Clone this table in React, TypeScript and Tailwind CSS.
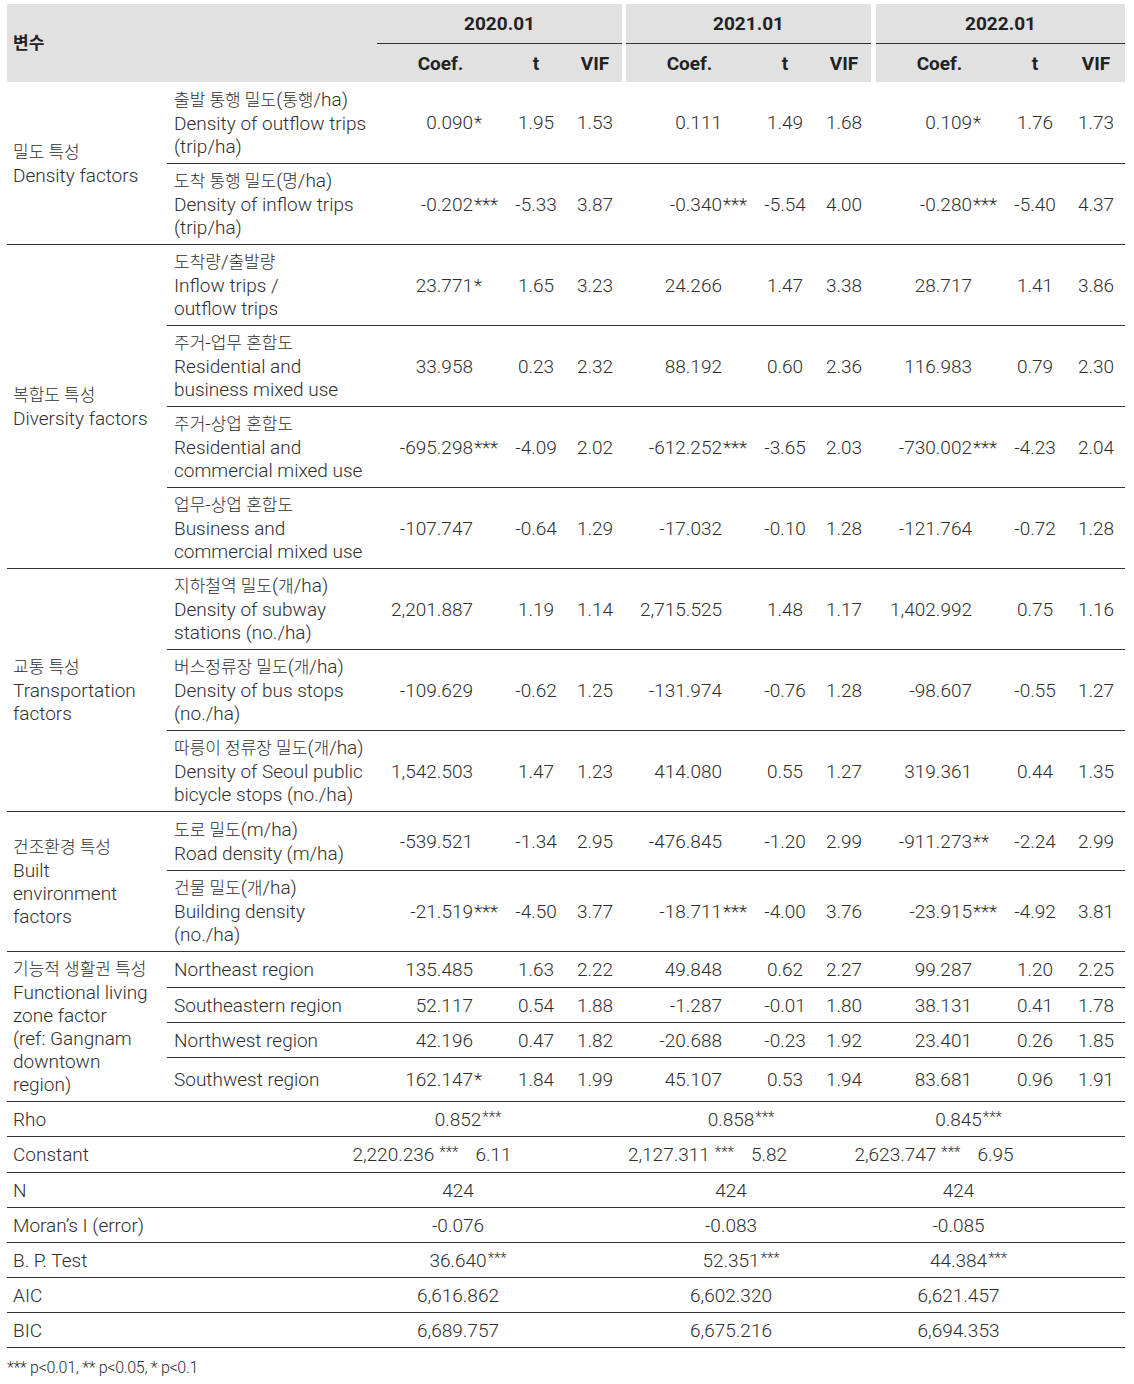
import React from "react";

type Cell = [string, string, string, string];
type Row = { label: string[]; h: number; vals: [Cell, Cell, Cell] };
type Group = { cat: string[]; rows: Row[] };

const groups: Group[] = [
  {
    cat: ["밀도 특성", "Density factors"],
    rows: [
      {
        label: ["출발 통행 밀도(통행/ha)", "Density of outflow trips", "(trip/ha)"],
        h: 82,
        vals: [
          ["0.090", "*", "1.95", "1.53"],
          ["0.111", "", "1.49", "1.68"],
          ["0.109", "*", "1.76", "1.73"],
        ],
      },
      {
        label: ["도착 통행 밀도(명/ha)", "Density of inflow trips", "(trip/ha)"],
        h: 81,
        vals: [
          ["-0.202", "***", "-5.33", "3.87"],
          ["-0.340", "***", "-5.54", "4.00"],
          ["-0.280", "***", "-5.40", "4.37"],
        ],
      },
    ],
  },
  {
    cat: ["복합도 특성", "Diversity factors"],
    rows: [
      {
        label: ["도착량/출발량", "Inflow trips /", "outflow trips"],
        h: 81,
        vals: [
          ["23.771", "*", "1.65", "3.23"],
          ["24.266", "", "1.47", "3.38"],
          ["28.717", "", "1.41", "3.86"],
        ],
      },
      {
        label: ["주거-업무 혼합도", "Residential and", "business mixed use"],
        h: 81,
        vals: [
          ["33.958", "", "0.23", "2.32"],
          ["88.192", "", "0.60", "2.36"],
          ["116.983", "", "0.79", "2.30"],
        ],
      },
      {
        label: ["주거-상업 혼합도", "Residential and", "commercial mixed use"],
        h: 81,
        vals: [
          ["-695.298", "***", "-4.09", "2.02"],
          ["-612.252", "***", "-3.65", "2.03"],
          ["-730.002", "***", "-4.23", "2.04"],
        ],
      },
      {
        label: ["업무-상업 혼합도", "Business and", "commercial mixed use"],
        h: 81,
        vals: [
          ["-107.747", "", "-0.64", "1.29"],
          ["-17.032", "", "-0.10", "1.28"],
          ["-121.764", "", "-0.72", "1.28"],
        ],
      },
    ],
  },
  {
    cat: ["교통 특성", "Transportation", "factors"],
    rows: [
      {
        label: ["지하철역 밀도(개/ha)", "Density of subway", "stations (no./ha)"],
        h: 81,
        vals: [
          ["2,201.887", "", "1.19", "1.14"],
          ["2,715.525", "", "1.48", "1.17"],
          ["1,402.992", "", "0.75", "1.16"],
        ],
      },
      {
        label: ["버스정류장 밀도(개/ha)", "Density of bus stops", "(no./ha)"],
        h: 81,
        vals: [
          ["-109.629", "", "-0.62", "1.25"],
          ["-131.974", "", "-0.76", "1.28"],
          ["-98.607", "", "-0.55", "1.27"],
        ],
      },
      {
        label: ["따릉이 정류장 밀도(개/ha)", "Density of Seoul public", "bicycle stops (no./ha)"],
        h: 81,
        vals: [
          ["1,542.503", "", "1.47", "1.23"],
          ["414.080", "", "0.55", "1.27"],
          ["319.361", "", "0.44", "1.35"],
        ],
      },
    ],
  },
  {
    cat: ["건조환경 특성", "Built", "environment", "factors"],
    rows: [
      {
        label: ["도로 밀도(m/ha)", "Road density (m/ha)"],
        h: 59,
        vals: [
          ["-539.521", "", "-1.34", "2.95"],
          ["-476.845", "", "-1.20", "2.99"],
          ["-911.273", "**", "-2.24", "2.99"],
        ],
      },
      {
        label: ["건물 밀도(개/ha)", "Building density", "(no./ha)"],
        h: 81,
        vals: [
          ["-21.519", "***", "-4.50", "3.77"],
          ["-18.711", "***", "-4.00", "3.76"],
          ["-23.915", "***", "-4.92", "3.81"],
        ],
      },
    ],
  },
  {
    cat: ["기능적 생활권 특성", "Functional living", "zone factor", "(ref: Gangnam", "downtown", "region)"],
    rows: [
      {
        label: ["Northeast region"],
        h: 36,
        vals: [
          ["135.485", "", "1.63", "2.22"],
          ["49.848", "", "0.62", "2.27"],
          ["99.287", "", "1.20", "2.25"],
        ],
      },
      {
        label: ["Southeastern region"],
        h: 35,
        vals: [
          ["52.117", "", "0.54", "1.88"],
          ["-1.287", "", "-0.01", "1.80"],
          ["38.131", "", "0.41", "1.78"],
        ],
      },
      {
        label: ["Northwest region"],
        h: 35,
        vals: [
          ["42.196", "", "0.47", "1.82"],
          ["-20.688", "", "-0.23", "1.92"],
          ["23.401", "", "0.26", "1.85"],
        ],
      },
      {
        label: ["Southwest region"],
        h: 44,
        vals: [
          ["162.147", "*", "1.84", "1.99"],
          ["45.107", "", "0.53", "1.94"],
          ["83.681", "", "0.96", "1.91"],
        ],
      },
    ],
  },
];

const line = "border-b border-[#333]";

function Ko({ s }: { s: string }) {
  const parts = s.split(/([\u3131-\uD79D]+(?:\s+[\u3131-\uD79D]+)*)/);
  return (
    <>
      {parts.map((p, i) =>
        /[\u3131-\uD79D]/.test(p) ? (
          <span key={i} className="text-[17px]">
            {p}
          </span>
        ) : (
          <span key={i}>{p}</span>
        )
      )}
    </>
  );
}

function Txt({ s }: { s: string }) {
  return (
    <div className="whitespace-nowrap">
      <Ko s={s} />
    </div>
  );
}

const rowHeights: Record<number, string> = {
  82: "h-[82px]",
  81: "h-[81px]",
  59: "h-[59px]",
  44: "h-[44px]",
  36: "h-[36px]",
  35: "h-[35px]",
};

type Stat = { label: string; h: string; vals: [string, string][] };
const stats: Stat[] = [
  { label: "Rho", h: "h-[35px]", vals: [["0.852", "***"], ["0.858", "***"], ["0.845", "***"]] },
  { label: "Constant", h: "h-[36px]", vals: [] },
  { label: "N", h: "h-[35px]", vals: [["424", ""], ["424", ""], ["424", ""]] },
  { label: "Moran’s I (error)", h: "h-[35px]", vals: [["-0.076", ""], ["-0.083", ""], ["-0.085", ""]] },
  { label: "B. P. Test", h: "h-[35px]", vals: [["36.640", "***"], ["52.351", "***"], ["44.384", "***"]] },
  { label: "AIC", h: "h-[35px]", vals: [["6,616.862", ""], ["6,602.320", ""], ["6,621.457", ""]] },
  { label: "BIC", h: "h-[35px]", vals: [["6,689.757", ""], ["6,675.216", ""], ["6,694.353", ""]] },
];

const statPad = ["pr-[83px]", "pr-[35px]", "pr-[84px]"];
const constPad = ["pr-[135px]", "pr-[82px]", "pr-[133px]"];
const constVals: [string, string][] = [
  ["2,220.236", "6.11"],
  ["2,127.311", "5.82"],
  ["2,623.747", "6.95"],
];

export default function App() {
  return (
    <div className="w-[1134px] min-h-[1384px] bg-white pt-[4px] pl-[7px] font-[family-name:Roboto,'Noto_Sans_CJK_KR',sans-serif] font-light text-[19px] leading-[23px] text-[#2e2e2e]">
      <table className="table-fixed border-separate border-spacing-0 w-[1118px]">
        <colgroup>
          <col className="w-[160px]" />
          <col className="w-[210px]" />
          <col className="w-[127px]" />
          <col className="w-[64px]" />
          <col className="w-[54px]" />
          <col className="w-[4px]" />
          <col className="w-[127px]" />
          <col className="w-[64px]" />
          <col className="w-[54px]" />
          <col className="w-[5px]" />
          <col className="w-[127px]" />
          <col className="w-[64px]" />
          <col className="w-[58px]" />
        </colgroup>
        <thead className="text-[#222]">
          <tr className="h-[40px]">
            <th rowSpan={2} colSpan={2} className="bg-[#e1e1e1] text-left pl-[6px] font-bold align-middle p-0">
              <Ko s="변수" />
            </th>
            <th colSpan={3} className="bg-[#e1e1e1] border-b border-[#333] font-bold p-0">2020.01</th>
            <th rowSpan={2} className="bg-white p-0"></th>
            <th colSpan={3} className="bg-[#e1e1e1] border-b border-[#333] font-bold p-0">2021.01</th>
            <th rowSpan={2} className="bg-white p-0"></th>
            <th colSpan={3} className="bg-[#e1e1e1] border-b border-[#333] font-bold p-0">2022.01</th>
          </tr>
          <tr className="h-[38px]">
            {[0, 1, 2].map((g) => (
              <React.Fragment key={g}>
                <th className="bg-[#e1e1e1] font-bold p-0">Coef.</th>
                <th className="bg-[#e1e1e1] font-bold p-0">t</th>
                <th className="bg-[#e1e1e1] font-bold p-0">VIF</th>
              </React.Fragment>
            ))}
          </tr>
        </thead>
        <tbody>
          {groups.map((grp, gi) =>
            grp.rows.map((r, ri) => (
              <tr key={`${gi}-${ri}`} className={rowHeights[r.h]}>
                {ri === 0 && (
                  <td rowSpan={grp.rows.length} className={`${line} pl-[6px] align-middle p-0`}>
                    {grp.cat.map((c, i) => (
                      <Txt key={i} s={c} />
                    ))}
                  </td>
                )}
                <td className={`${line} pl-[7px] align-middle p-0`}>
                  {r.label.map((c, i) => (
                    <Txt key={i} s={c} />
                  ))}
                </td>
                {r.vals.map((v, vi) => (
                  <React.Fragment key={vi}>
                    <td className={`${line} p-0 align-middle`}>
                      <div className="flex justify-end whitespace-nowrap">
                        <span>{v[0]}</span>
                        <span className="w-[31px] pl-[1px] text-left">{v[1]}</span>
                      </div>
                    </td>
                    <td className={`${line} p-0 text-center align-middle whitespace-nowrap`}>{v[2]}</td>
                    <td className={`${line} p-0 text-center align-middle whitespace-nowrap`}>{v[3]}</td>
                    {vi < 2 && <td className={`${line} p-0`}></td>}
                  </React.Fragment>
                ))}
              </tr>
            ))
          )}
          {stats.map((s, si) => (
            <tr key={si} className={s.h}>
              <td colSpan={2} className={`${line} pl-[6px] p-0 align-middle whitespace-nowrap`}>
                {s.label}
              </td>
              {[0, 1, 2].map((g) => (
                <React.Fragment key={g}>
                  <td colSpan={3} className={`${line} p-0 align-middle`}>
                    {s.label === "Constant" ? (
                      <div className={`flex justify-center items-start whitespace-nowrap ${constPad[g]}`}>
                        <span>{constVals[g][0]}</span>
                        <span className="ml-[5px] text-[15px] leading-[18px]">***</span>
                        <span className="ml-[17px]">{constVals[g][1]}</span>
                      </div>
                    ) : (
                      <div className={`flex justify-center whitespace-nowrap ${statPad[g]}`}>
                        <span className="relative">
                          {s.vals[g][0]}
                          {s.vals[g][1] && (
                            <span className="absolute left-full top-0 pl-[1px] text-[15px] leading-[18px]">{s.vals[g][1]}</span>
                          )}
                        </span>
                      </div>
                    )}
                  </td>
                  {g < 2 && <td className={`${line} p-0`}></td>}
                </React.Fragment>
              ))}
            </tr>
          ))}
        </tbody>
      </table>
      <div className="mt-[8px] text-[16px] leading-[23px] tracking-[-0.3px]">*** p&lt;0.01, ** p&lt;0.05, * p&lt;0.1</div>
    </div>
  );
}
